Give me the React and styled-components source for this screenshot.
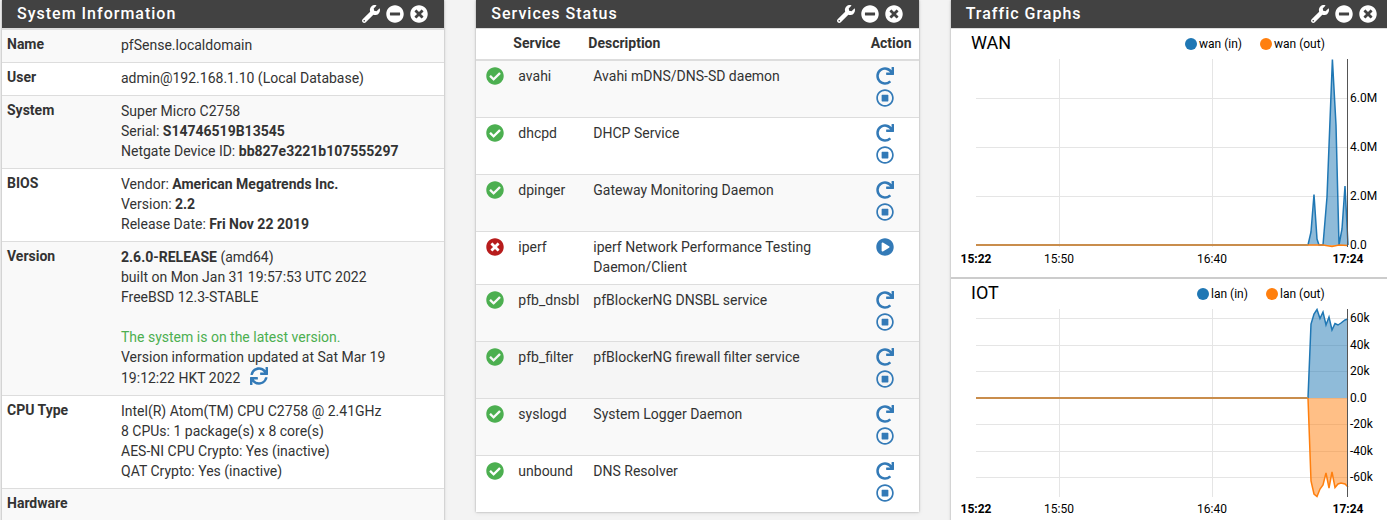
import React from "react";
import styled, { createGlobalStyle, css } from "styled-components";
import {
  FaCheckCircle,
  FaMinusCircle,
  FaPlayCircle,
  FaRedo,
  FaRegStopCircle,
  FaSync,
  FaTimesCircle,
  FaWrench,
} from "react-icons/fa";

const GlobalStyle = createGlobalStyle`
  * {
    box-sizing: border-box;
  }
  body {
    margin: 0;
    background-color: #f3f3f3;
    color: #333;
    font-family: Roboto, sans-serif;
    font-size: 14px;
    line-height: 20px;
  }
`;

const Dashboard = styled.main`
  display: grid;
  grid-template-columns: repeat(3, minmax(0, 1fr));
  gap: 32px;
  align-items: start;
  height: 100vh;
  margin-right: -6px;
  padding-left: 2px;
  overflow: hidden;
`;
const Panel = styled.section`
  background-color: #fff;
  box-shadow: 0 0 2px rgba(0, 0, 0, 0.3), 0 1px 5px rgba(0, 0, 0, 0.08);
`;
const PanelHeading = styled.header`
  display: flex;
  align-items: center;
  justify-content: space-between;
  height: 29px;
  padding: 0 16px 0 15px;
  border-bottom: 1px solid #ddd;
  background-color: #424242;
  color: #fff;
`;
const PanelTitle = styled.h2`
  margin: 0;
  font-size: 16px;
  font-weight: 500;
  letter-spacing: 1px;
`;
const PanelTools = styled.div`
  display: flex;
  gap: 6px;
`;
const IconButton = styled.button`
  display: flex;
  padding: 0;
  border: 0;
  background: none;
  color: inherit;
  font-size: 18px;
  cursor: pointer;
`;

const Table = styled.table`
  width: 100%;
  border-collapse: collapse;
  table-layout: fixed;
`;
const Row = styled.tr`
  background-color: ${(props) => props.$background || "#fff"};
`;
const cell = css`
  border-top: 1px solid #ddd;
  text-align: left;
  vertical-align: top;
`;
const InfoLabel = styled.th`
  ${cell}
  width: 114px;
  padding: 4px 5px;
  font-weight: 700;
`;
const InfoValue = styled.td`
  ${cell}
  padding: 5px 40px 7px 5px;
`;
const Success = styled.span`
  color: #4caf50;
`;
const RefreshButton = styled(IconButton)`
  display: inline-flex;
  margin-left: 10px;
  color: #337ab7;
  vertical-align: -2px;
`;

const ServiceHead = styled.th`
  height: 31px;
  padding: 0 5px 2px;
  border-bottom: 2px solid #ddd;
  font-weight: 700;
  text-align: left;
`;
const ServiceCell = styled.td`
  ${cell}
  padding: 5px 10px 7px;
`;
const StatusIcon = styled.span`
  display: flex;
  padding-top: 1px;
  color: ${(props) => (props.$running ? "#4caf50" : "#b71c1c")};
  font-size: 18px;

  svg {
    flex-shrink: 0;
  }
`;
const Actions = styled.div`
  display: flex;
  flex-direction: column;
  gap: 4px;
  padding: ${(props) => (props.$stacked ? "1px 0 3px" : "1px 0 0")};
  color: #337ab7;
`;

const GraphPanel = styled.div`
  border-bottom: 2px solid #ccc;
`;
const Graph = styled.svg`
  display: block;
  width: 100%;
  height: 248px;
  overflow: visible;
  color: #000;
  font-family: Roboto, sans-serif;
  font-size: 12px;
`;

const PanelHeader = ({ title }) => (
  <PanelHeading>
    <PanelTitle>{title}</PanelTitle>
    <PanelTools>
      <IconButton aria-label={`Configure ${title}`}>
        <FaWrench />
      </IconButton>
      <IconButton aria-label={`Minimize ${title}`}>
        <FaMinusCircle />
      </IconButton>
      <IconButton aria-label={`Close ${title}`}>
        <FaTimesCircle />
      </IconButton>
    </PanelTools>
  </PanelHeading>
);

const info = [
  { label: "Name", value: "pfSense.localdomain" },
  { label: "User", value: "admin@192.168.1.10 (Local Database)" },
  {
    label: "System",
    value: (
      <>
        Super Micro C2758
        <br />
        Serial: <b>S14746519B13545</b>
        <br />
        Netgate Device ID: <b>bb827e3221b107555297</b>
      </>
    ),
  },
  {
    label: "BIOS",
    value: (
      <>
        Vendor: <b>American Megatrends Inc.</b>
        <br />
        Version: <b>2.2</b>
        <br />
        Release Date: <b>Fri Nov 22 2019</b>
      </>
    ),
  },
  {
    label: "Version",
    value: (
      <>
        <b>2.6.0-RELEASE</b> (amd64)
        <br />
        built on Mon Jan 31 19:57:53 UTC 2022
        <br />
        FreeBSD 12.3-STABLE
        <br />
        <br />
        <Success>The system is on the latest version.</Success>
        <br />
        Version information updated at Sat Mar 19 19:12:22 HKT 2022
        <RefreshButton aria-label="Refresh version">
          <FaSync />
        </RefreshButton>
      </>
    ),
  },
  {
    label: "CPU Type",
    value: (
      <>
        Intel(R) Atom(TM) CPU C2758 @ 2.41GHz
        <br />
        8 CPUs: 1 package(s) x 8 core(s)
        <br />
        AES-NI CPU Crypto: Yes (inactive)
        <br />
        QAT Crypto: Yes (inactive)
      </>
    ),
  },
  {
    label: "Hardware",
    value: (
      <>
        <br />
        <br />
      </>
    ),
  },
];

const SystemInformation = () => (
  <Panel>
    <PanelHeader title="System Information" />
    <Table>
      <tbody>
        {info.map((item, i) => (
          <Row key={item.label} $background={i % 2 === 0 && "#f9f9f9"}>
            <InfoLabel scope="row">{item.label}</InfoLabel>
            <InfoValue>{item.value}</InfoValue>
          </Row>
        ))}
      </tbody>
    </Table>
  </Panel>
);

const services = [
  { name: "avahi", description: "Avahi mDNS/DNS-SD daemon", running: true },
  { name: "dhcpd", description: "DHCP Service", running: true },
  { name: "dpinger", description: "Gateway Monitoring Daemon", running: true },
  {
    name: "iperf",
    description: "iperf Network Performance Testing Daemon/Client",
    running: false,
  },
  { name: "pfb_dnsbl", description: "pfBlockerNG DNSBL service", running: true },
  {
    name: "pfb_filter",
    description: "pfBlockerNG firewall filter service",
    running: true,
    hovered: true,
  },
  { name: "syslogd", description: "System Logger Daemon", running: true },
  { name: "unbound", description: "DNS Resolver", running: true },
];

const rowBackground = (service, i) => {
  if (service.hovered) return "#f5f5f5";
  return i % 2 === 0 ? "#f9f9f9" : "#fff";
};

const ServicesStatus = () => (
  <Panel>
    <PanelHeader title="Services Status" />
    <Table>
      <colgroup>
        <col width="32" />
        <col width="75" />
        <col />
        <col width="53" />
      </colgroup>
      <thead>
        <tr>
          <ServiceHead />
          <ServiceHead scope="col">Service</ServiceHead>
          <ServiceHead scope="col">Description</ServiceHead>
          <ServiceHead scope="col">Action</ServiceHead>
        </tr>
      </thead>
      <tbody>
        {services.map((service, i) => (
          <Row key={service.name} $background={rowBackground(service, i)}>
            <ServiceCell>
              <StatusIcon $running={service.running}>
                {service.running ? <FaCheckCircle /> : <FaTimesCircle />}
              </StatusIcon>
            </ServiceCell>
            <ServiceCell>{service.name}</ServiceCell>
            <ServiceCell>{service.description}</ServiceCell>
            <ServiceCell>
              <Actions $stacked={service.running}>
                {service.running ? (
                  <>
                    <IconButton aria-label={`Restart ${service.name}`}>
                      <FaRedo />
                    </IconButton>
                    <IconButton aria-label={`Stop ${service.name}`}>
                      <FaRegStopCircle />
                    </IconButton>
                  </>
                ) : (
                  <IconButton aria-label={`Start ${service.name}`}>
                    <FaPlayCircle />
                  </IconButton>
                )}
              </Actions>
            </ServiceCell>
          </Row>
        ))}
      </tbody>
    </Table>
  </Panel>
);

// Chart coordinates: plot area spans x 25-397 and y 30-218.
const graphs = [
  {
    title: "WAN",
    name: "wan",
    legend: [240, 315],
    zero: 216,
    ticks: [
      { y: 69, label: "6.0M" },
      { y: 118, label: "4.0M" },
      { y: 167, label: "2.0M" },
      { y: 216, label: "0.0" },
    ],
    inbound:
      "357,216 360,203 363,165.5 366,210 368,216 372,216 376,168 381.4,30.5 385,96 388,216 391,200 394,157 397,216",
    outbound: "357,216 372,216 381,217.5 388,216 397,216.5",
  },
  {
    title: "IOT",
    name: "lan",
    legend: [252, 321],
    zero: 119,
    ticks: [
      { y: 39, label: "60k" },
      { y: 66, label: "40k" },
      { y: 92, label: "20k" },
      { y: 119, label: "0.0" },
      { y: 145, label: "-20k" },
      { y: 172, label: "-40k" },
      { y: 198, label: "-60k" },
    ],
    inbound:
      "357,119 360,45 363,35 366,30.5 369,39.5 372,33 375,46 378,38 381,51 384,44.5 387,46 390,44 394,41 397,40",
    outbound:
      "357,119 360,202 363,215 366,217.5 369,210 372,206 375,194 378,209 381,193 384,208.5 387,205 390,204 394,205 397,208",
  },
];

const times = [
  { x: 25, label: "15:22", bold: true },
  { x: 108, label: "15:50" },
  { x: 261, label: "16:40" },
  { x: 397, label: "17:24", bold: true },
];

const Series = ({ points, zero, color }) => (
  <g>
    <polygon
      points={`357,${zero} ${points} 397,${zero}`}
      fill={color}
      fillOpacity="0.5"
    />
    <polyline points={points} fill="none" stroke={color} strokeWidth="1.5" />
  </g>
);

const TrafficGraph = ({ title, name, legend, zero, ticks, inbound, outbound }) => (
  <GraphPanel>
    <Graph role="img" aria-label={`${title} traffic`}>
      <text x="20" y="20" fontSize="18">
        {title}
      </text>
      <circle cx={legend[0]} cy="15" r="6" fill="#1f77b4" />
      <text x={legend[0] + 8} y="19">
        {name} (in)
      </text>
      <circle cx={legend[1]} cy="15" r="6" fill="#ff7f0e" />
      <text x={legend[1] + 8} y="19">
        {name} (out)
      </text>
      <g stroke="#e5e5e5" shapeRendering="crispEdges">
        {ticks.map((tick) => (
          <line key={tick.label} x1="25" x2="397" y1={tick.y} y2={tick.y} />
        ))}
        <line x1="108" x2="108" y1="30" y2="218" />
        <line x1="261" x2="261" y1="30" y2="218" />
      </g>
      <Series points={inbound} zero={zero} color="#1f77b4" />
      <Series points={outbound} zero={zero} color="#ff7f0e" />
      <line x1="25" x2="357" y1={zero} y2={zero} stroke="#c98d4c" strokeWidth="2" />
      <line
        x1="396"
        x2="396"
        y1="30"
        y2="218"
        stroke="#555"
        shapeRendering="crispEdges"
      />
      {ticks.map((tick) => (
        <text key={tick.label} x="399" y={tick.y + 4}>
          {tick.label}
        </text>
      ))}
      {times.map((time) => (
        <text
          key={time.label}
          x={time.x}
          y="234"
          textAnchor="middle"
          fontWeight={time.bold ? 700 : 400}
        >
          {time.label}
        </text>
      ))}
    </Graph>
  </GraphPanel>
);

const TrafficGraphs = () => (
  <Panel>
    <PanelHeader title="Traffic Graphs" />
    {graphs.map((graph) => (
      <TrafficGraph key={graph.name} {...graph} />
    ))}
  </Panel>
);

const App = () => {
  return (
    <>
      <GlobalStyle />
      <Dashboard>
        <SystemInformation />
        <ServicesStatus />
        <TrafficGraphs />
      </Dashboard>
    </>
  );
};

export default App;
